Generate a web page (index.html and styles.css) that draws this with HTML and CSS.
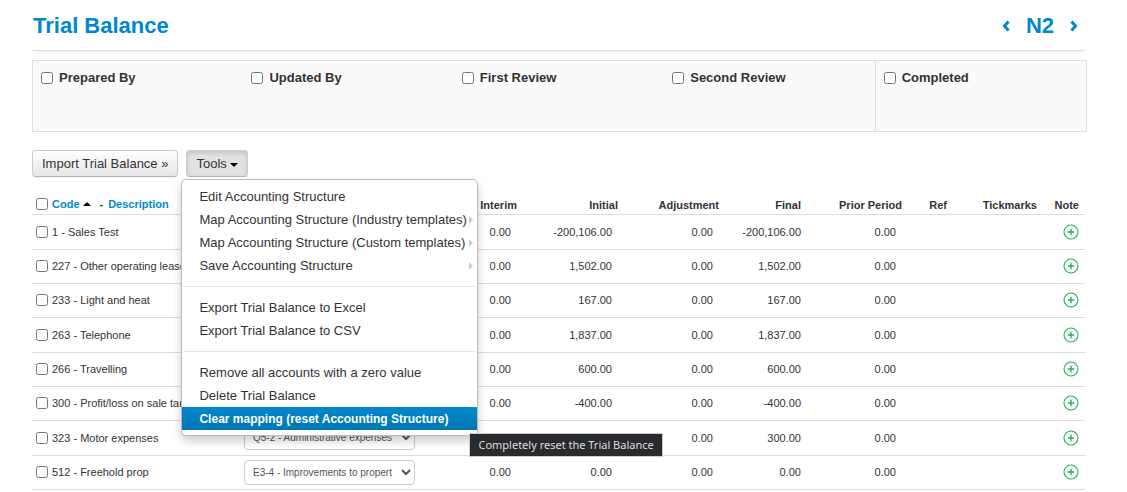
FILE: index.html
```html
<!DOCTYPE html>
<html lang="en">
<head>
    <meta charset="UTF-8">
    <meta name="viewport" content="width=device-width, initial-scale=1.0">
    <title>Trial Balance</title>
    <link rel="stylesheet" href="styles.css">
</head>
<body>
    <svg class="sprite" aria-hidden="true">
        <symbol id="plus" viewBox="0 0 16 16">
            <circle cx="8" cy="8" r="7" fill="none" stroke="#27ae60" stroke-width="1.1"/>
            <path d="M8 4.7v6.6M4.7 8h6.6" fill="none" stroke="#27ae60" stroke-width="1.4"/>
        </symbol>
    </svg>

    <header class="page-header">
        <h1>Trial Balance</h1>
        <nav class="pager">
            <a href="#" aria-label="Previous"><svg width="8" height="12" viewBox="0 0 8 12"><path d="M6.5 1.5L2.5 6l4 4.5"/></svg></a>
            <span>N2</span>
            <a href="#" aria-label="Next"><svg width="8" height="12" viewBox="0 0 8 12"><path d="M1.5 1.5l4 4.5-4 4.5"/></svg></a>
        </nav>
    </header>

    <section class="signoff">
        <label><input type="checkbox">Prepared By</label>
        <label><input type="checkbox">Updated By</label>
        <label><input type="checkbox">First Review</label>
        <label><input type="checkbox">Second Review</label>
        <label class="completed"><input type="checkbox">Completed</label>
    </section>

    <div class="toolbar">
        <button type="button" class="btn">Import Trial Balance »</button>
        <div class="dropdown">
            <button type="button" class="btn active">Tools <span class="caret"></span></button>
            <ul class="menu">
                <li><a href="#">Edit Accounting Structure</a></li>
                <li><a href="#" class="submenu">Map Accounting Structure (Industry templates)</a></li>
                <li><a href="#" class="submenu">Map Accounting Structure (Custom templates)</a></li>
                <li><a href="#" class="submenu">Save Accounting Structure</a></li>
                <li class="divider"></li>
                <li><a href="#">Export Trial Balance to Excel</a></li>
                <li><a href="#">Export Trial Balance to CSV</a></li>
                <li class="divider"></li>
                <li><a href="#">Remove all accounts with a zero value</a></li>
                <li><a href="#">Delete Trial Balance</a></li>
                <li class="selected">
                    <a href="#">Clear mapping (reset Accounting Structure)</a>
                    <span class="tooltip" role="tooltip">Completely reset the Trial Balance</span>
                </li>
            </ul>
        </div>
    </div>

    <table class="accounts">
        <colgroup>
            <col>
            <col class="col-mapping">
            <col class="col-interim">
            <col class="col-amount">
            <col class="col-amount">
            <col class="col-final">
            <col class="col-amount">
            <col class="col-ref">
            <col class="col-tickmarks">
            <col class="col-note">
        </colgroup>
        <thead>
            <tr>
                <th class="account">
                    <div class="sort">
                        <input type="checkbox" aria-label="Select all">
                        <a href="#">Code</a><span class="caret up"></span>
                        <span class="dash">-</span>
                        <a href="#">Description</a>
                    </div>
                </th>
                <th></th>
                <th>Interim</th>
                <th>Initial</th>
                <th>Adjustment</th>
                <th>Final</th>
                <th>Prior Period</th>
                <th>Ref</th>
                <th>Tickmarks</th>
                <th class="note">Note</th>
            </tr>
        </thead>
        <tbody>
            <tr>
                <td class="account"><label><input type="checkbox">1 - Sales Test</label></td>
                <td></td>
                <td>0.00</td><td>-200,106.00</td><td>0.00</td><td class="final">-200,106.00</td><td>0.00</td>
                <td></td><td></td>
                <td class="note"><a href="#" aria-label="Add note"><svg width="16" height="16"><use href="#plus"/></svg></a></td>
            </tr>
            <tr>
                <td class="account"><label><input type="checkbox">227 - Other operating lease</label></td>
                <td></td>
                <td>0.00</td><td>1,502.00</td><td>0.00</td><td class="final">1,502.00</td><td>0.00</td>
                <td></td><td></td>
                <td class="note"><a href="#" aria-label="Add note"><svg width="16" height="16"><use href="#plus"/></svg></a></td>
            </tr>
            <tr>
                <td class="account"><label><input type="checkbox">233 - Light and heat</label></td>
                <td></td>
                <td>0.00</td><td>167.00</td><td>0.00</td><td class="final">167.00</td><td>0.00</td>
                <td></td><td></td>
                <td class="note"><a href="#" aria-label="Add note"><svg width="16" height="16"><use href="#plus"/></svg></a></td>
            </tr>
            <tr>
                <td class="account"><label><input type="checkbox">263 - Telephone</label></td>
                <td></td>
                <td>0.00</td><td>1,837.00</td><td>0.00</td><td class="final">1,837.00</td><td>0.00</td>
                <td></td><td></td>
                <td class="note"><a href="#" aria-label="Add note"><svg width="16" height="16"><use href="#plus"/></svg></a></td>
            </tr>
            <tr>
                <td class="account"><label><input type="checkbox">266 - Travelling</label></td>
                <td></td>
                <td>0.00</td><td>600.00</td><td>0.00</td><td class="final">600.00</td><td>0.00</td>
                <td></td><td></td>
                <td class="note"><a href="#" aria-label="Add note"><svg width="16" height="16"><use href="#plus"/></svg></a></td>
            </tr>
            <tr>
                <td class="account"><label><input type="checkbox">300 - Profit/loss on sale tang</label></td>
                <td></td>
                <td>0.00</td><td>-400.00</td><td>0.00</td><td class="final">-400.00</td><td>0.00</td>
                <td></td><td></td>
                <td class="note"><a href="#" aria-label="Add note"><svg width="16" height="16"><use href="#plus"/></svg></a></td>
            </tr>
            <tr>
                <td class="account"><label><input type="checkbox">323 - Motor expenses</label></td>
                <td class="mapping"><select aria-label="Mapping for 323"><option>Q5-2 - Administrative expenses</option></select></td>
                <td></td><td></td><td>0.00</td><td class="final">300.00</td><td>0.00</td>
                <td></td><td></td>
                <td class="note"><a href="#" aria-label="Add note"><svg width="16" height="16"><use href="#plus"/></svg></a></td>
            </tr>
            <tr>
                <td class="account"><label><input type="checkbox">512 - Freehold prop</label></td>
                <td class="mapping"><select aria-label="Mapping for 512"><option>E3-4 - Improvements to propert</option></select></td>
                <td>0.00</td><td>0.00</td><td>0.00</td><td class="final">0.00</td><td>0.00</td>
                <td></td><td></td>
                <td class="note"><a href="#" aria-label="Add note"><svg width="16" height="16"><use href="#plus"/></svg></a></td>
            </tr>
        </tbody>
    </table>
</body>
</html>
```
FILE: styles.css
```css
* {
    box-sizing: border-box;
}

body {
    margin: 0;
    padding: 0 40px 0 32px;
    background: #fff;
    color: #333;
    font-family: Arial, "Liberation Sans", sans-serif;
    font-size: 13px;
}

a {
    color: #0088cc;
    text-decoration: none;
}

input[type="checkbox"] {
    width: 12px;
    height: 12px;
    margin: 0;
    flex: none;
}

.sprite {
    display: none;
}

.page-header {
    display: flex;
    justify-content: space-between;
    align-items: center;
    height: 51px;
    margin-right: 2px;
    padding: 2px 7px 0 1px;
    border-bottom: 1px solid #ddd;
    box-shadow: 0 4px 4px -3px #eee;
    color: #0088cc;
    font-size: 22px;
    font-weight: bold;
}

.page-header h1 {
    margin: 0;
    font-size: 22px;
}

.pager {
    display: flex;
    align-items: center;
    gap: 16px;
}

.pager a {
    display: flex;
}

.pager path {
    fill: none;
    stroke: #0088cc;
    stroke-width: 3;
}

/* sign-off boxes */
.signoff {
    display: flex;
    height: 72px;
    margin-top: 9px;
    border: 1px solid #ddd;
    background: #fafafa;
}

.signoff label {
    display: flex;
    flex: 1;
    align-items: flex-start;
    gap: 6px;
    padding: 9px 8px;
    font-weight: bold;
    line-height: 15px;
}

.signoff input {
    margin-top: 2px;
}

.signoff .completed {
    border-left: 1px solid #ddd;
}

/* toolbar */
.toolbar {
    display: flex;
    gap: 8px;
    margin-top: 18px;
}

.dropdown {
    position: relative;
}

.btn {
    height: 27px;
    padding: 0 9px;
    border: 1px solid #ccc;
    border-bottom-color: #b3b3b3;
    border-radius: 4px;
    background: linear-gradient(#fff, #e6e6e6);
    box-shadow: 0 1px 2px rgba(0, 0, 0, 0.05);
    color: #333;
    font: inherit;
}

.btn.active {
    background: #e2e2e2;
    box-shadow: inset 0 2px 4px rgba(0, 0, 0, 0.15);
}

.caret {
    display: inline-block;
    border: 4px solid transparent;
    border-top-color: #000;
    border-bottom: 0;
    vertical-align: middle;
}

.caret.up {
    border-top: 0;
    border-bottom: 4px solid #000;
}

.menu {
    position: absolute;
    top: 29px;
    left: -5px;
    z-index: 10;
    width: 297px;
    margin: 0;
    padding: 5px 0;
    border: 1px solid #bbb;
    border-radius: 5px;
    background: #fff;
    box-shadow: 0 5px 10px rgba(0, 0, 0, 0.2);
    list-style: none;
}

.menu a {
    display: flex;
    align-items: center;
    justify-content: space-between;
    height: 23px;
    padding: 0 4px 0 17px;
    color: #333;
    white-space: nowrap;
}

.menu .submenu::after {
    content: "";
    border: 4px solid transparent;
    border-left-color: #ccc;
    border-right: 0;
}

.menu .divider {
    height: 1px;
    margin: 9px 1px;
    background: #e5e5e5;
}

.menu .selected {
    position: relative;
}

.menu .selected a {
    background: linear-gradient(#0088cc, #0077b3);
    color: #fff;
    font-size: 12px;
    font-weight: bold;
}

.tooltip {
    position: absolute;
    top: 26px;
    left: 287px;
    padding: 0 8px;
    border: 1px solid #ccc;
    background: #292b2f;
    color: #ddd;
    font-family: "Segoe UI", "Noto Sans", sans-serif;
    font-size: 11px;
    line-height: 22px;
    white-space: nowrap;
}

/* accounts table */
.accounts {
    width: calc(100% - 2px);
    margin-top: 17px;
    border-collapse: collapse;
    table-layout: fixed;
    font-size: 11px;
}

.col-mapping { width: 196px; }
.col-interim { width: 77px; }
.col-amount { width: 101px; }
.col-final { width: 82px; }
.col-ref { width: 45px; }
.col-tickmarks { width: 90px; }
.col-note { width: 48px; }

.accounts th,
.accounts td {
    padding: 0;
    border-bottom: 1px solid #ddd;
    text-align: right;
    white-space: nowrap;
}

.accounts th {
    height: 20px;
    padding-top: 2px;
}

.accounts td {
    height: 34px;
    padding-right: 6px;
}

.accounts tr:nth-child(3n+1) td {
    height: 35px;
}

.accounts td.final {
    padding-right: 0;
}

.accounts .account {
    padding: 0 0 0 4px;
    text-align: left;
}

.account label,
.sort {
    display: flex;
    align-items: center;
}

.account input {
    margin-right: 4px;
}

.sort .up {
    margin-left: 3px;
}

.sort .dash {
    margin: 0 5px 0 9px;
}

.accounts .mapping {
    text-align: left;
}

.mapping select {
    display: block;
    width: 171px;
    height: 25px;
    padding: 0 4px;
    border: 1px solid #ccc;
    border-radius: 4px;
    background: #fff;
    color: #555;
    font: inherit;
    font-size: 10px;
}

.accounts .note {
    padding-right: 6px;
}

.note svg {
    display: block;
    margin-left: auto;
}
```
